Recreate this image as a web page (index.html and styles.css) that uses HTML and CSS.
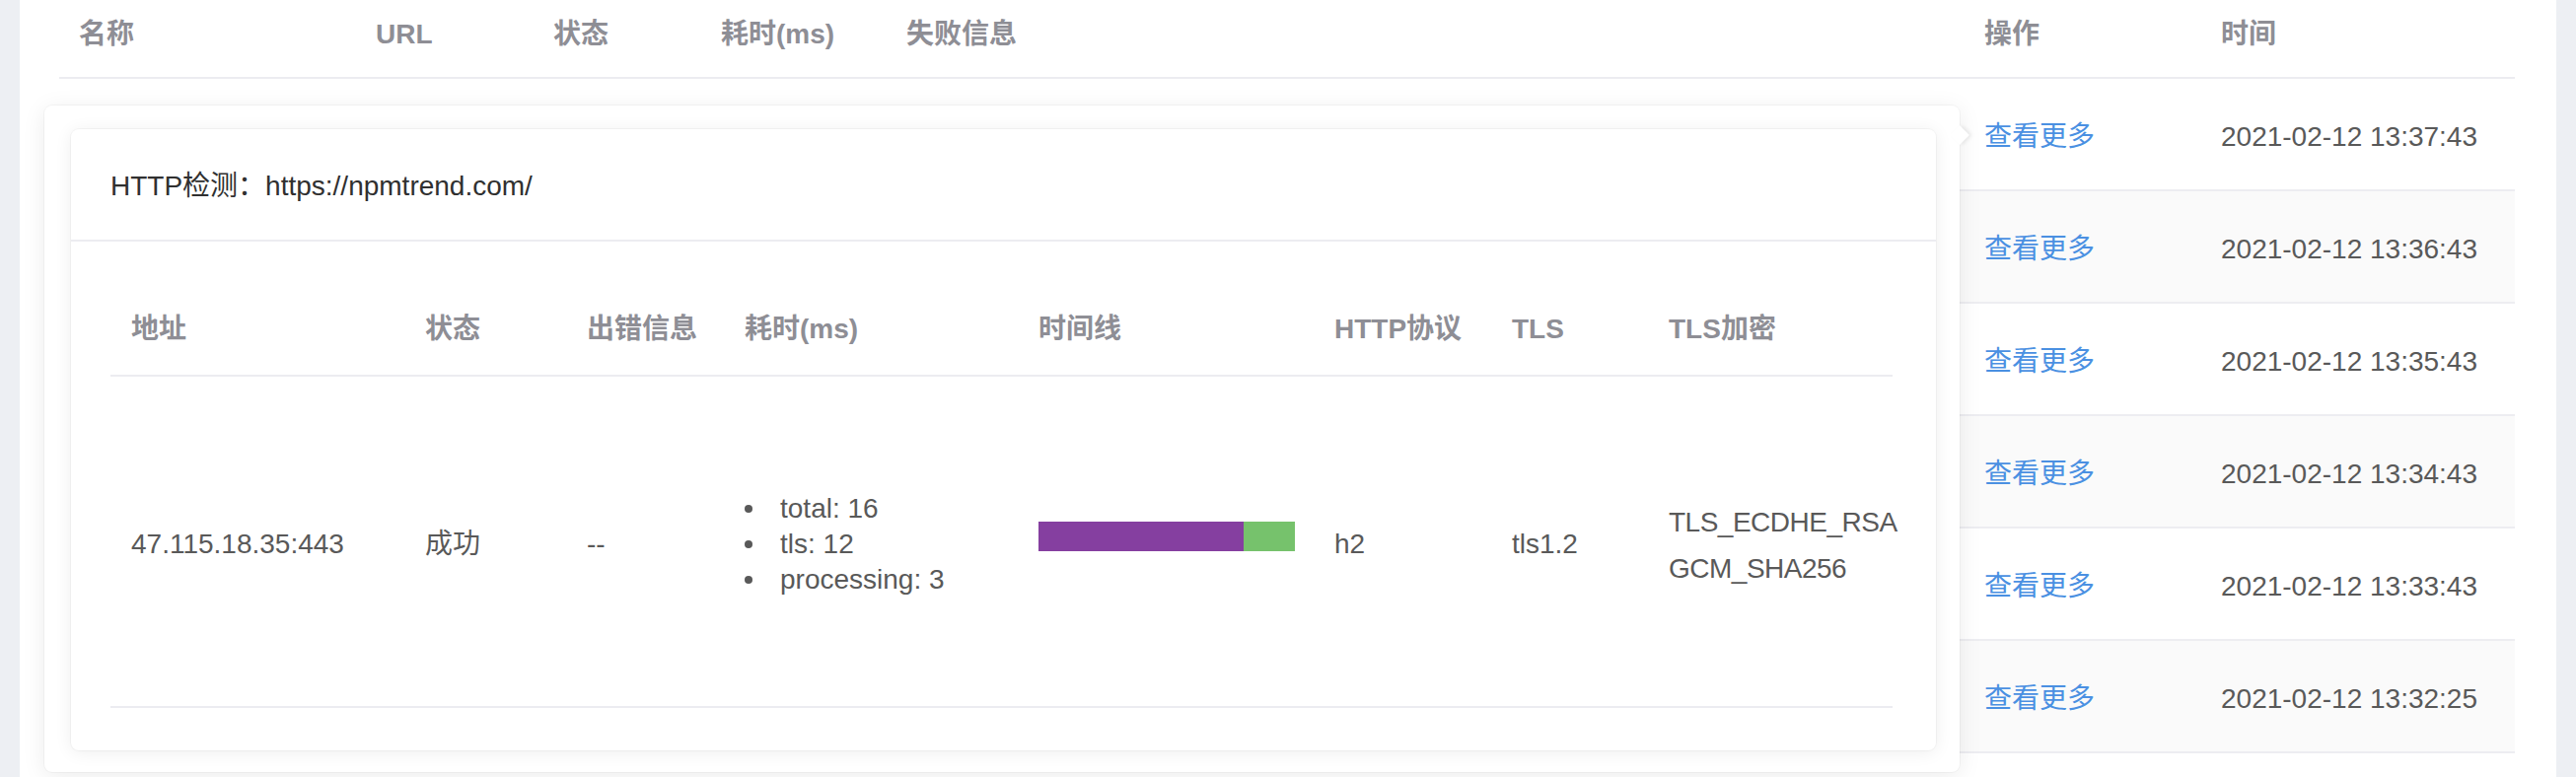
FILE: index.html
```html
<!DOCTYPE html>
<html lang="zh-CN">
<head>
<meta charset="utf-8">
<title>HTTP检测</title>
<link rel="stylesheet" href="styles.css">
</head>
<body>
<div class="panel">
  <table class="main-table">
    <colgroup>
      <col class="c-name"><col class="c-url"><col class="c-status"><col class="c-cost"><col class="c-fail"><col class="c-op"><col class="c-time">
    </colgroup>
    <thead>
      <tr><th>名称</th><th>URL</th><th>状态</th><th>耗时(ms)</th><th>失败信息</th><th>操作</th><th>时间</th></tr>
    </thead>
    <tbody>
      <tr><td></td><td></td><td></td><td></td><td></td><td><a class="link">查看更多</a></td><td>2021-02-12 13:37:43</td></tr>
      <tr><td></td><td></td><td></td><td></td><td></td><td><a class="link">查看更多</a></td><td>2021-02-12 13:36:43</td></tr>
      <tr><td></td><td></td><td></td><td></td><td></td><td><a class="link">查看更多</a></td><td>2021-02-12 13:35:43</td></tr>
      <tr><td></td><td></td><td></td><td></td><td></td><td><a class="link">查看更多</a></td><td>2021-02-12 13:34:43</td></tr>
      <tr><td></td><td></td><td></td><td></td><td></td><td><a class="link">查看更多</a></td><td>2021-02-12 13:33:43</td></tr>
      <tr><td></td><td></td><td></td><td></td><td></td><td><a class="link">查看更多</a></td><td>2021-02-12 13:32:25</td></tr>
    </tbody>
  </table>

  <div class="popover">
    <div class="card">
      <div class="card-head">HTTP检测：https://npmtrend.com/</div>
      <div class="card-body">
        <table class="detail-table">
          <colgroup>
            <col class="d-addr"><col class="d-status"><col class="d-err"><col class="d-cost"><col class="d-line"><col class="d-proto"><col class="d-tls"><col class="d-cipher">
          </colgroup>
          <thead>
            <tr><th>地址</th><th>状态</th><th>出错信息</th><th>耗时(ms)</th><th>时间线</th><th>HTTP协议</th><th>TLS</th><th>TLS加密</th></tr>
          </thead>
          <tbody>
            <tr>
              <td>47.115.18.35:443</td>
              <td>成功</td>
              <td>--</td>
              <td>
                <ul class="timing">
                  <li>total: 16</li>
                  <li>tls: 12</li>
                  <li>processing: 3</li>
                </ul>
              </td>
              <td>
                <div class="timeline">
                  <span class="seg seg-tls" style="width: 80%"></span>
                  <span class="seg seg-proc" style="width: 20%"></span>
                </div>
              </td>
              <td>h2</td>
              <td>tls1.2</td>
              <td>
                <div class="cipher"><span>TLS_ECDHE_RSA</span><span>GCM_SHA256</span></div>
              </td>
            </tr>
          </tbody>
        </table>
      </div>
    </div>
  </div>
</div>
</body>
</html>
```

FILE: styles.css
```css
* { box-sizing: border-box; }

html, body {
  margin: 0;
  height: 100%;
  overflow: hidden;
}

body {
  background: #edeff3;
  padding: 0 20px;
  font-family: "Liberation Sans", "Noto Sans CJK SC", sans-serif;
  font-size: 28px;
  line-height: 44px;
  color: #595959;
}

.panel {
  position: relative;
  background: #ffffff;
  height: 100%;
  padding: 0 42px 0 40px;
}

/* main table */
.main-table {
  width: 100%;
  border-collapse: collapse;
  table-layout: fixed;
}
.c-name { width: 301px; }
.c-url { width: 180px; }
.c-status { width: 170px; }
.c-cost { width: 188px; }
.c-fail { width: 1093px; }
.c-op { width: 240px; }
.c-time { width: 318px; }

.main-table th {
  text-align: left;
  font-weight: 700;
  color: #8e8e95;
  padding: 13px 20px 21px;
  border-bottom: 2px solid #ececf1;
}
.main-table td {
  padding: 37px 20px 31px;
  border-bottom: 2px solid #ededf1;
  white-space: nowrap;
  color: #595959;
}
.main-table tbody tr:nth-child(even) td {
  background: #fafafa;
}

.link {
  color: #4a90e2;
  text-decoration: none;
}

/* popover overlay */
.popover {
  position: absolute;
  left: 25px;
  top: 107px;
  width: 1942px;
  height: 676px;
  background: #ffffff;
  border-radius: 8px;
  padding: 24px 24px 22px 27px;
  box-shadow: 0 0 0 1px rgba(0, 0, 0, 0.03), 0 4px 24px rgba(0, 0, 0, 0.08);
}
.popover::after {
  content: "";
  position: absolute;
  right: -7px;
  top: 23px;
  width: 14px;
  height: 14px;
  background: #ffffff;
  transform: rotate(45deg);
  box-shadow: 2px -2px 4px rgba(0, 0, 0, 0.08);
}

.card {
  height: 100%;
  background: #ffffff;
  border-radius: 8px;
  box-shadow: 0 0 0 1px rgba(0, 0, 0, 0.03), 0 2px 18px rgba(0, 0, 0, 0.07);
  display: flex;
  flex-direction: column;
}
.card-head {
  padding: 36px 40px 32px;
  color: #303030;
  border-bottom: 2px solid #ececf1;
}
.card-body {
  flex: 1;
  padding: 33px 44px 0 40px;
}

/* detail table */
.detail-table {
  width: 100%;
  border-collapse: collapse;
  table-layout: fixed;
}
.d-addr { width: 298px; }
.d-status { width: 164px; }
.d-err { width: 160px; }
.d-cost { width: 298px; }
.d-line { width: 300px; }
.d-proto { width: 180px; }
.d-tls { width: 159px; }
.d-cipher { width: 248px; }

.detail-table th {
  text-align: left;
  font-weight: 700;
  color: #8e8e95;
  padding: 34px 0 24px 21px;
  border-bottom: 2px solid #ececf1;
  white-space: nowrap;
}
.detail-table td {
  padding: 35px 0 29px 21px;
  border-bottom: 2px solid #ececf1;
  vertical-align: middle;
  white-space: nowrap;
  color: #595959;
}

.timing {
  list-style: none;
  margin: 81px 0;
  padding: 0;
  line-height: 36px;
}
.timing li {
  display: flex;
  align-items: center;
}
.timing li::before {
  content: "";
  width: 8px;
  height: 8px;
  border-radius: 50%;
  background: #595959;
  margin-right: 28px;
  flex: none;
}

.timeline {
  display: flex;
  width: 260px;
  height: 30px;
  margin-bottom: 16px;
}
.seg { display: block; height: 100%; }
.seg-tls { background: #853fa0; }
.seg-proc { background: #76c26c; }

.cipher {
  display: flex;
  flex-direction: column;
  gap: 3px;
  margin-top: 2px;
  letter-spacing: -0.5px;
}
```
